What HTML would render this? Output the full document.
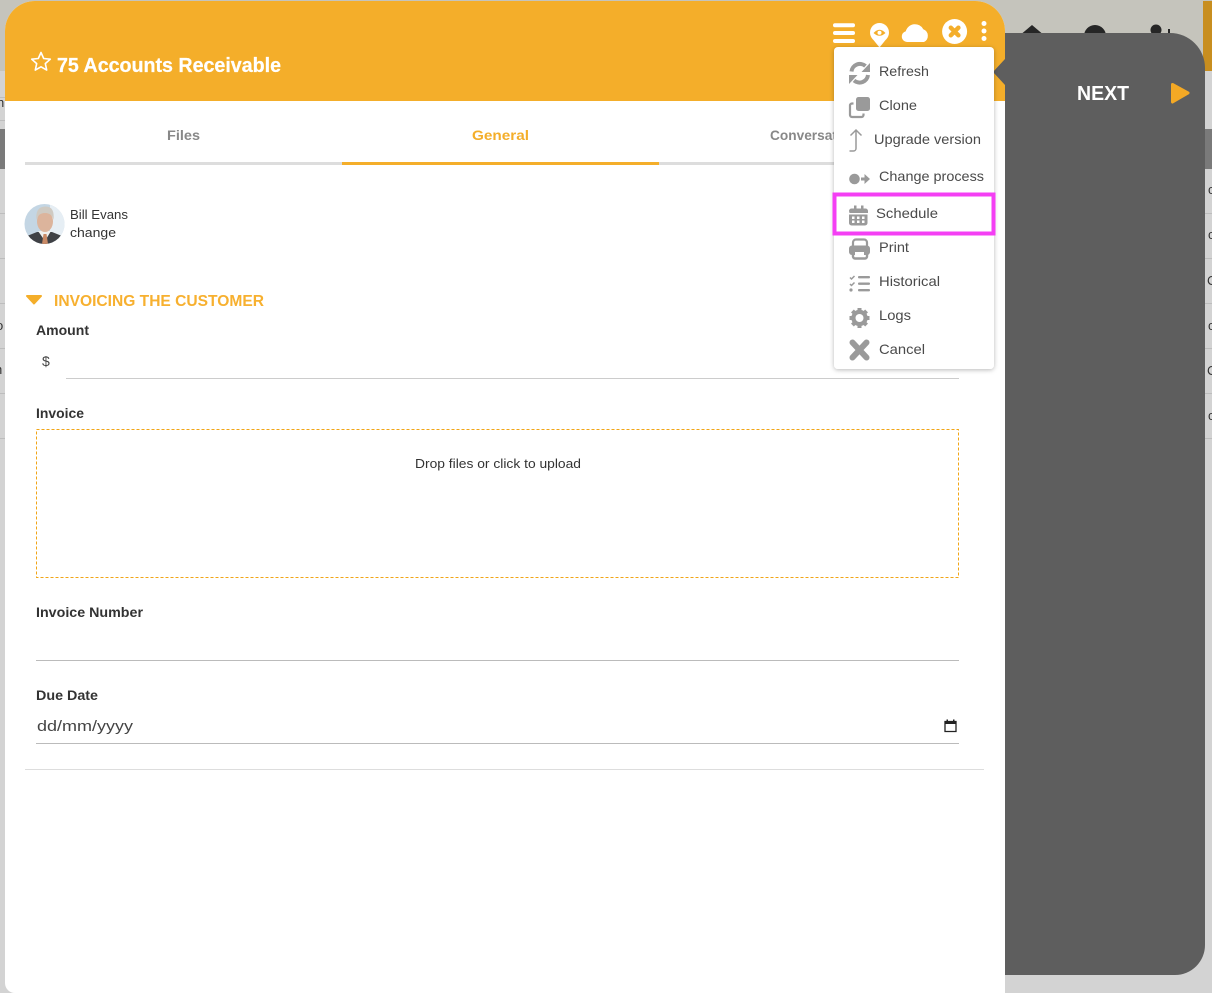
<!DOCTYPE html>
<html lang="en">
<head>
<meta charset="utf-8">
<title>75 Accounts Receivable</title>
<style>
html,body{margin:0;padding:0;width:1212px;height:993px;overflow:hidden;background:#d3d3d3}
svg{display:block}
text{font-family:"Liberation Sans",sans-serif}
</style>
</head>
<body>
<svg width="1212" height="993" viewBox="0 0 1212 993" xmlns="http://www.w3.org/2000/svg">
<defs>
<filter id="sh" x="-20%" y="-20%" width="140%" height="140%"><feDropShadow dx="0" dy="1" stdDeviation="2.5" flood-color="#000" flood-opacity=".28"/></filter>
<clipPath id="av"><circle cx="44.5" cy="224" r="20"/></clipPath>
</defs>

<!-- background page -->
<rect width="1212" height="993" fill="#d3d3d3"/>
<rect width="1212" height="71" fill="#c5c4bc"/>
<rect x="1203" y="1" width="9" height="70" fill="#c88e1f"/>
<rect y="129" width="1212" height="40" fill="#7a7a7a"/>
<g fill="#bdbdbd">
<rect y="97" width="6" height="1"/><rect y="120" width="6" height="1"/>
<rect y="213" width="1212" height="1"/><rect y="258" width="1212" height="1"/><rect y="303" width="1212" height="1"/><rect y="348" width="1212" height="1"/><rect y="393" width="1212" height="1"/><rect y="438" width="1212" height="1"/>
</g>
<g font-size="13" fill="#333">
<text x="-3" y="107">n</text><text x="-4" y="330">o</text><text x="-5" y="374">h</text>
<text x="1208" y="194">c</text><text x="1208" y="239">c</text><text x="1207" y="285">C</text><text x="1208" y="330">c</text><text x="1207" y="375">C</text><text x="1208" y="420">c</text>
</g>
<g fill="#262626">
<path d="M1032 25l13 11h-26z"/><circle cx="1095" cy="36" r="11"/><circle cx="1156" cy="30" r="5.5"/><rect x="1168" y="29" width="2" height="6"/>
</g>

<!-- dark next panel -->
<path d="M990 33H1170a35 35 0 0 1 35 35V945a30 30 0 0 1-30 30H990z" fill="#5e5e5e"/>

<!-- modal -->
<path d="M35 1H975a30 30 0 0 1 30 30V993H15a10 10 0 0 1-10-10V31a30 30 0 0 1 30-30z" fill="#fff"/>
<path d="M35 1H975a30 30 0 0 1 30 30V101H5V31a30 30 0 0 1 30-30z" fill="#f4ae2a"/>
<path d="M993 72l12-13v26z" fill="#5e5e5e"/>

<!-- next label -->
<text x="1077" y="100" font-size="20" font-weight="700" fill="#fff" textLength="52" lengthAdjust="spacingAndGlyphs">NEXT</text>
<path d="M1172.500 84.500L1188 93L1172.500 102z" fill="#f4a925" stroke="#f4a925" stroke-width="3" stroke-linejoin="round"/>

<!-- header -->
<path d="M41 52.500l2.700 6 6.600.7-5 4.400 1.400 6.500-5.700-3.300-5.700 3.300 1.400-6.500-5-4.400 6.600-.7z" fill="none" stroke="#fff" stroke-width="1.600" stroke-linejoin="round"/>
<text x="57" y="72" font-size="20" font-weight="700" fill="#fff" stroke="#fff" stroke-width=".25" textLength="224" lengthAdjust="spacingAndGlyphs">75 Accounts Receivable</text>

<!-- top icons -->
<g fill="#fff">
<rect x="833" y="23.300" width="22" height="4" rx="2"/><rect x="833" y="31" width="22" height="4" rx="2"/><rect x="833" y="39" width="22" height="4" rx="2"/>
<circle cx="879.500" cy="32.500" r="9.500"/><path d="M871.500 37.500L879.500 47.500L887.500 37.500z"/>
<path d="M907 42a5.500 5.500 0 0 1-1.200-10.800 9.500 9.500 0 0 1 17.500-2 7 7 0 0 1 .7 12.800z"/>
<circle cx="954.600" cy="31.500" r="12.500"/>
<circle cx="984" cy="23.500" r="2.500"/><circle cx="984" cy="31" r="2.500"/><circle cx="984" cy="38.500" r="2.500"/>
</g>
<path d="M873.500 33q6-6.500 12 0q-6 5.500-12 0z" fill="#f4ae2a"/><circle cx="879.500" cy="32.800" r="2" fill="#fff"/>
<path d="M950.800 27.700l7.600 7.600M958.400 27.700l-7.600 7.600" stroke="#f4ae2a" stroke-width="4.400" stroke-linecap="round"/>

<!-- tabs -->
<text x="167" y="140" font-size="14" font-weight="700" fill="#888" textLength="33" lengthAdjust="spacingAndGlyphs">Files</text>
<text x="472" y="140" font-size="14" font-weight="700" fill="#f4ae2a" textLength="57" lengthAdjust="spacingAndGlyphs">General</text>
<text x="770" y="140" font-size="14" font-weight="700" fill="#888" textLength="95" lengthAdjust="spacingAndGlyphs">Conversations</text>
<rect x="25" y="162" width="317" height="3" fill="#ddd"/>
<rect x="342" y="162" width="317" height="3" fill="#f4ae2a"/>
<rect x="659" y="162" width="317" height="3" fill="#ddd"/>

<!-- user -->
<g clip-path="url(#av)">
<rect x="24" y="203" width="41" height="42" fill="#c4d6e4"/>
<rect x="50" y="203" width="15" height="42" fill="#e6eef4"/>
<path d="M24 245l3-9 10-4h15l10 4 3 9z" fill="#3f4145"/>
<path d="M38 231h13l-6 10z" fill="#f0f0ee"/><path d="M43.500 234h3l1.500 10h-6z" fill="#c98a66"/>
<ellipse cx="45" cy="221.500" rx="8" ry="10.500" fill="#dcb49c"/>
<path d="M36.500 220q-1.500-13 8.500-13.500t8.500 13.500q-1.500-7-8.500-7t-8.500 7z" fill="#cfcac2"/>
</g>
<text x="70" y="219" font-size="13" fill="#333" textLength="58" lengthAdjust="spacingAndGlyphs">Bill Evans</text>
<text x="70" y="237" font-size="13" fill="#333" textLength="46" lengthAdjust="spacingAndGlyphs">change</text>

<!-- section -->
<path d="M27 296h14l-7 7.500z" fill="#f4ae2a" stroke="#f4ae2a" stroke-width="2" stroke-linejoin="round"/>
<text x="54" y="306" font-size="16" font-weight="700" fill="#f7b02f" textLength="210" lengthAdjust="spacingAndGlyphs">INVOICING THE CUSTOMER</text>

<!-- form -->
<g font-size="14" font-weight="700" fill="#333">
<text x="36" y="335" textLength="53" lengthAdjust="spacingAndGlyphs">Amount</text>
<text x="36" y="418" textLength="48" lengthAdjust="spacingAndGlyphs">Invoice</text>
<text x="36" y="617" textLength="107" lengthAdjust="spacingAndGlyphs">Invoice Number</text>
<text x="36" y="700" textLength="62" lengthAdjust="spacingAndGlyphs">Due Date</text>
</g>
<text x="42" y="366" font-size="14" fill="#444">$</text>
<rect x="66" y="378" width="893" height="1" fill="#ccc"/>
<rect x="36.500" y="429.500" width="922" height="148" fill="none" stroke="#f2a516" stroke-dasharray="3 2"/>
<text x="415" y="468" font-size="13" fill="#333" textLength="166" lengthAdjust="spacingAndGlyphs">Drop files or click to upload</text>
<rect x="36" y="660" width="923" height="1" fill="#bbb"/>
<text x="37" y="731" font-size="15" fill="#444" textLength="96" lengthAdjust="spacingAndGlyphs">dd/mm/yyyy</text>
<path d="M945 721.500h11v10h-11z" fill="none" stroke="#222" stroke-width="1.300"/><rect x="945" y="721" width="11" height="3" fill="#222"/><rect x="946.500" y="719.500" width="1.500" height="2" fill="#222"/><rect x="953" y="719.500" width="1.500" height="2" fill="#222"/>
<rect x="36" y="743" width="923" height="1" fill="#bbb"/>
<rect x="25" y="769" width="959" height="1" fill="#ddd"/>

<!-- dropdown -->
<rect x="834" y="47" width="160" height="322" rx="4" fill="#fff" filter="url(#sh)"/>

<g font-size="14" fill="#4a4a4a">
<text x="879" y="76" textLength="50" lengthAdjust="spacingAndGlyphs">Refresh</text>
<text x="879" y="110" textLength="38" lengthAdjust="spacingAndGlyphs">Clone</text>
<text x="874" y="144" textLength="107" lengthAdjust="spacingAndGlyphs">Upgrade version</text>
<text x="879" y="181" textLength="105" lengthAdjust="spacingAndGlyphs">Change process</text>
<text x="876" y="218" textLength="62" lengthAdjust="spacingAndGlyphs">Schedule</text>
<text x="879" y="252" textLength="30" lengthAdjust="spacingAndGlyphs">Print</text>
<text x="879" y="286" textLength="61" lengthAdjust="spacingAndGlyphs">Historical</text>
<text x="879" y="320" textLength="32" lengthAdjust="spacingAndGlyphs">Logs</text>
<text x="879" y="354" textLength="46" lengthAdjust="spacingAndGlyphs">Cancel</text>
</g>

<!-- menu icons -->
<g fill="#9a9a9a">
<!-- refresh -->
<path d="M851.500 71.500a8.500 8.500 0 0 1 14-5.500" fill="none" stroke="#9a9a9a" stroke-width="4"/><path d="M870 63v9h-8.500z"/>
<path d="M868 75a8.500 8.500 0 0 1-14 5.500" fill="none" stroke="#9a9a9a" stroke-width="4"/><path d="M849 84v-9h8.500z"/>
<!-- clone -->
<rect x="856" y="97" width="14" height="14" rx="2.500"/>
<path d="M853.500 103.500h-1.500a2 2 0 0 0-2 2v9.500a2 2 0 0 0 2 2h9.500a2 2 0 0 0 2-2v-1.500" fill="none" stroke="#9a9a9a" stroke-width="2.200"/>
<!-- upgrade -->
<path d="M850.500 135.500l5.500-5.500 5.500 5.500M856 130.500v18a2.500 2.500 0 0 1-2.500 2.500h-4" fill="none" stroke="#9a9a9a" stroke-width="1.500"/>
<!-- change process -->
<circle cx="854.500" cy="179" r="5.300"/>
<path d="M861 177.500h3.500v-3.500l5.500 5-5.500 5v-3.500h-3.500z"/>
<!-- calendar -->
<path d="M849 211a2.500 2.500 0 0 1 2.500-2.500h2.500v-3h2.500v3h4.500v-3h2.500v3h2a2.500 2.500 0 0 1 2.500 2.500v2h-18.500zM849 214.500h18.500v8.500a2.500 2.500 0 0 1-2.500 2.500h-13.500a2.500 2.500 0 0 1-2.500-2.500z"/>
<g fill="#fff"><rect x="852" y="216.500" width="2.500" height="2.500"/><rect x="857" y="216.500" width="2.500" height="2.500"/><rect x="862" y="216.500" width="2.500" height="2.500"/><rect x="852" y="220.500" width="2.500" height="2.500"/><rect x="857" y="220.500" width="2.500" height="2.500"/><rect x="862" y="220.500" width="2.500" height="2.500"/></g>
<!-- print -->
<path d="M853 246v-3.500a3 3 0 0 1 3-3h8a3 3 0 0 1 3 3v3.500" fill="none" stroke="#9a9a9a" stroke-width="2.200"/>
<rect x="849" y="245.500" width="21" height="9.500" rx="3"/>
<path d="M853 254v2.500a2 2 0 0 0 2 2h10a2 2 0 0 0 2-2v-2.500" fill="none" stroke="#9a9a9a" stroke-width="2.400"/>
<rect x="855" y="252" width="9" height="5" fill="#fff"/>
<!-- historical -->
<path d="M850 277.500l1.500 1.500 3-3M850 284l1.500 1.500 3-3" fill="none" stroke="#9a9a9a" stroke-width="1.500"/>
<circle cx="851" cy="290" r="1.600"/>
<rect x="858" y="276" width="12" height="2.400" rx="1"/><rect x="858" y="282.500" width="12" height="2.400" rx="1"/><rect x="858" y="289" width="12" height="2.400" rx="1"/>
<!-- gear -->
<g transform="translate(859.500 318)">
<circle r="6.200" fill="none" stroke="#9a9a9a" stroke-width="4"/>
<rect x="-2" y="-10" width="4" height="20"/>
<rect x="-2" y="-10" width="4" height="20" transform="rotate(45)"/>
<rect x="-2" y="-10" width="4" height="20" transform="rotate(90)"/>
<rect x="-2" y="-10" width="4" height="20" transform="rotate(135)"/>
<circle r="4" fill="#fff"/>
</g>
</g>
<path d="M852.500 342.500l14 15M866.500 342.500l-14 15" stroke="#9a9a9a" stroke-width="6" stroke-linecap="round"/>

<!-- highlight -->
<rect x="834.500" y="194.500" width="159" height="39" fill="none" stroke="#f43ff4" stroke-width="4"/>
</svg>
</body>
</html>
